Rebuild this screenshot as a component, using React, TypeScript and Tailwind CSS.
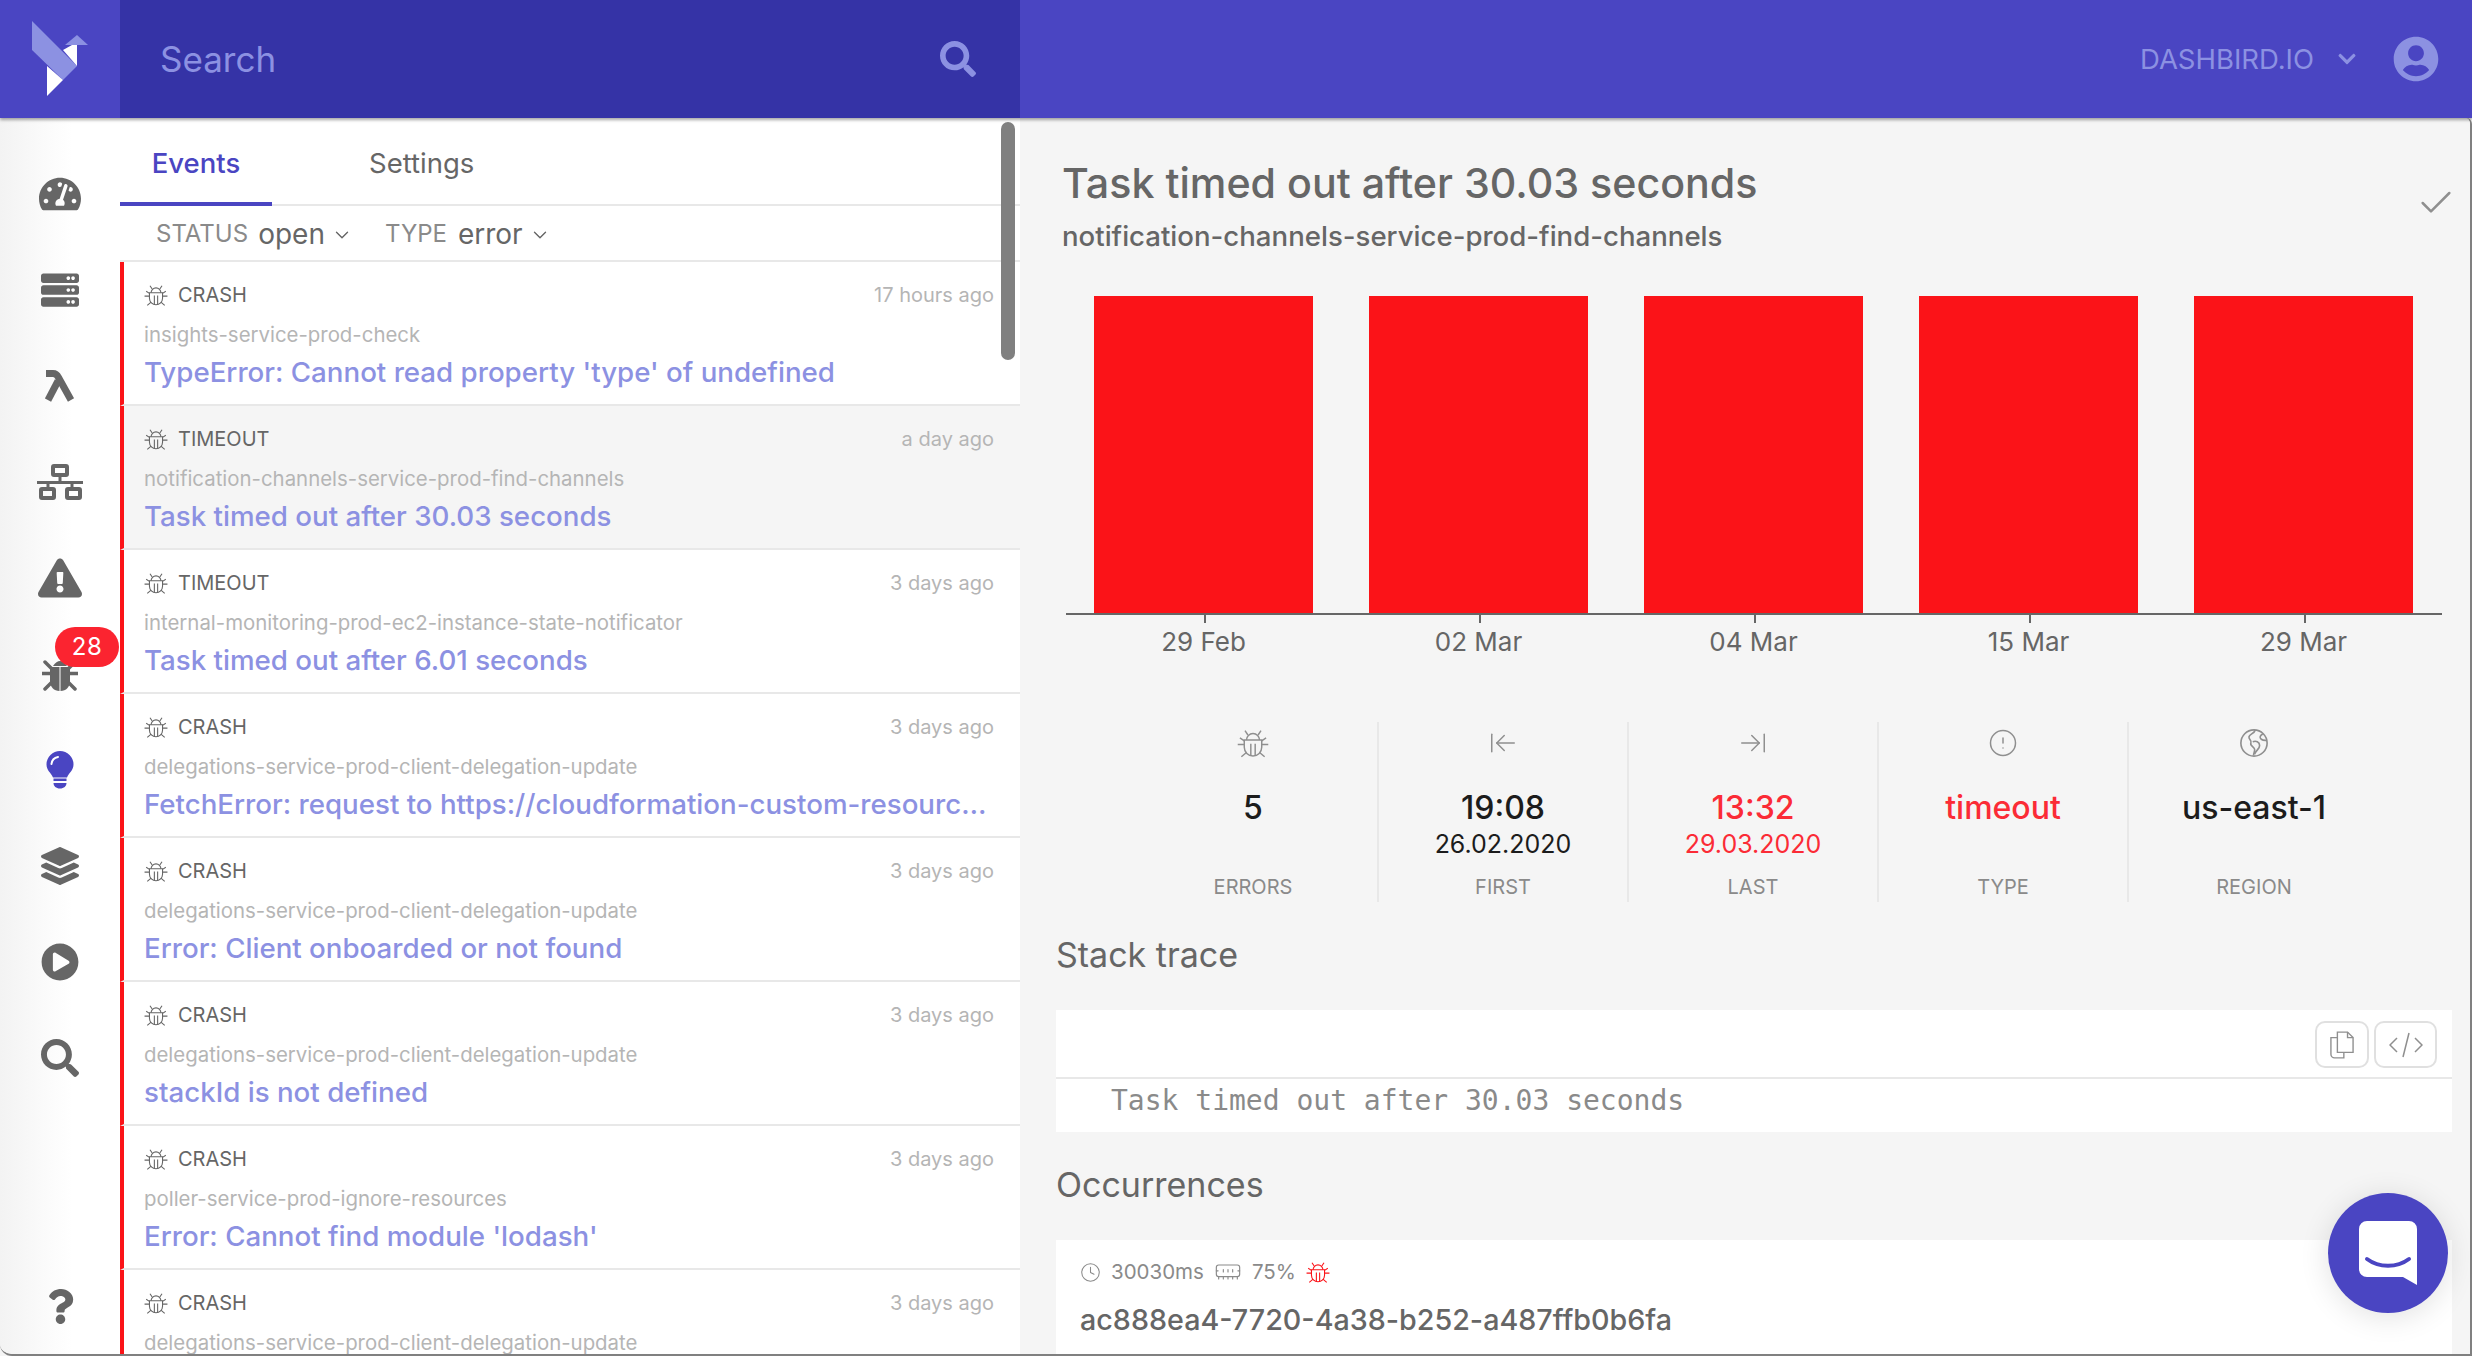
import {
  FaChevronDown,
  FaExclamationTriangle,
  FaLayerGroup,
  FaPlayCircle,
  FaQuestion,
  FaSearch,
  FaServer,
  FaTachometerAlt,
  FaUserCircle,
} from "react-icons/fa";
import { ArrowLeftToLine, ArrowRightToLine, Check, ChevronDown, CircleAlert, Clock, MemoryStick } from "lucide-react";

type EventItem = { kind: string; ago: string; fn: string; title: string; active?: boolean };

const events: EventItem[] = [
  { kind: "CRASH", ago: "17 hours ago", fn: "insights-service-prod-check", title: "TypeError: Cannot read property 'type' of undefined" },
  { kind: "TIMEOUT", ago: "a day ago", fn: "notification-channels-service-prod-find-channels", title: "Task timed out after 30.03 seconds", active: true },
  { kind: "TIMEOUT", ago: "3 days ago", fn: "internal-monitoring-prod-ec2-instance-state-notificator", title: "Task timed out after 6.01 seconds" },
  { kind: "CRASH", ago: "3 days ago", fn: "delegations-service-prod-client-delegation-update", title: "FetchError: request to https://cloudformation-custom-resource-response-useast1.s3.amazonaws.com" },
  { kind: "CRASH", ago: "3 days ago", fn: "delegations-service-prod-client-delegation-update", title: "Error: Client onboarded or not found" },
  { kind: "CRASH", ago: "3 days ago", fn: "delegations-service-prod-client-delegation-update", title: "stackId is not defined" },
  { kind: "CRASH", ago: "3 days ago", fn: "poller-service-prod-ignore-resources", title: "Error: Cannot find module 'lodash'" },
  { kind: "CRASH", ago: "3 days ago", fn: "delegations-service-prod-client-delegation-update", title: "Error: Client onboarded or not found" },
];

const bars = ["29 Feb", "02 Mar", "04 Mar", "15 Mar", "29 Mar"];

function BugOutline({ className }: { className?: string }) {
  return (
    <svg viewBox="0 0 22 20" fill="none" stroke="currentColor" strokeWidth="1" className={className}>
      <path d="M5 8h12v5a6 6 0 0 1-12 0z" />
      <path d="M6.500 8a4.500 4.500 0 0 1 9 0" />
      <path d="M7.500 4.500 5.500 1.500M14.500 4.500l2-3M5 11H.5M17 11h4.500M5 8.500 2 6.500M17 8.500l3-2M6.500 16.500 3 19.500M15.500 16.500l3.500 3" />
      <path d="M9.500 10.500v8M12.500 10.500v8" />
    </svg>
  );
}

function BugFilled() {
  return (
    <svg viewBox="0 0 36 36" className="h-[36px] w-[36px]" fill="#666666">
      <path d="M11 10q7-10 14 0z" />
      <path d="M8 11h9.500v24C12 35 8 31 8 25z" />
      <path d="M18.500 11H28v14c0 6-4 10-9.500 10z" />
      <path d="M0 17.500h8M28 17.500h8M3 33l6-6M33 33l-6-6M3 6l6 6M33 6l-6 6" stroke="#666666" strokeWidth="3.500" strokeLinecap="round" />
    </svg>
  );
}

function Bulb() {
  return (
    <svg viewBox="0 0 28 38" className="h-[38px] w-[28px]">
      <path d="M14 0a13.500 13.500 0 0 1 13.500 13.500c0 6-4.500 8-6.500 13H7c-2-5-6.500-7-6.500-13A13.500 13.500 0 0 1 14 0z" fill="#4a45c2" />
      <path d="M7.500 27.500h13V30h-13zM7.500 32h13c0 3-2.500 5.500-6.500 5.500S7.500 35 7.500 32z" fill="#4a45c2" />
      <path d="M5.500 13a8 8 0 0 1 6.500-7" fill="none" stroke="#ffffff" strokeWidth="2" strokeLinecap="round" />
    </svg>
  );
}

function Logo() {
  return (
    <svg viewBox="0 0 120 118" className="h-[118px] w-[120px]">
      <path d="M32 21 L77 66 L63 80 L32 50 Z" fill="#8c91e2" />
      <path d="M47 66 L63 80 L47 96 Z" fill="#ffffff" />
      <path d="M63 50 L72 45 L77 45 L77 66 Z" fill="#ffffff" />
      <path d="M65 45 L77 35 L88 45 Z" fill="#8c91e2" />
    </svg>
  );
}

function Lambda() {
  return (
    <svg viewBox="0 0 30 32" className="h-[32px] w-[30px]" fill="none" stroke="#666666" strokeWidth="7">
      <path d="M1 3.500h7q3.500 0 5.500 4L26 30" />
      <path d="M3 30 13 11" />
    </svg>
  );
}

function Network() {
  return (
    <svg viewBox="0 0 46 36" className="h-[36px] w-[46px]" fill="none" stroke="#666666" strokeWidth="4">
      <rect x="16" y="2" width="14" height="9" rx="1" />
      <path d="M23 12v6M0 18.500h46M11 18v6M35 18v6" strokeWidth="3" />
      <rect x="4" y="25" width="13" height="9" rx="1" />
      <rect x="30" y="25" width="13" height="9" rx="1" />
    </svg>
  );
}

function Earth() {
  return (
    <svg viewBox="0 0 24 24" className="h-[30px] w-[30px]" fill="none" stroke="currentColor" strokeWidth="1.300">
      <circle cx="12" cy="12" r="10.500" />
      <path d="M13 1.700c-1 3-4.500 3-5 5.300s2.500 2.800 1.500 5 2.700 3 3 5-1 3-.8 5" />
      <path d="M19 4.800c-2 1-3 3-1.200 4.200s3 .8 4.500 1" />
      <path d="M11 11c2.500-1 5.500 0 5.500 3s-3 3.500-4 7" />
    </svg>
  );
}

function CopyIcon() {
  return (
    <svg viewBox="0 0 26 30" className="h-[28px] w-[24px]" fill="none" stroke="#8f8f8f" strokeWidth="1.500">
      <path d="M8 1h11l6 6v16H8z" />
      <path d="M19 1v6h6" />
      <path d="M8 7H1v18a4 4 0 0 0 4 4h10v-6" />
    </svg>
  );
}

function CodeIcon() {
  return (
    <svg viewBox="0 0 34 26" className="h-[26px] w-[34px]" fill="none" stroke="#8f8f8f" strokeWidth="1.500">
      <path d="M8 6 1 13l7 7M26 6l7 7-7 7M20 1l-6 24" />
    </svg>
  );
}

function NavItem({ children }: { children: React.ReactNode }) {
  return <div className="flex h-[96px] items-center justify-center text-[#666666]">{children}</div>;
}

function Sidebar() {
  return (
    <div className="flex w-[120px] shrink-0 flex-col bg-gradient-to-r from-[#f3f3f3] to-white to-60% pt-[28px]">
      <NavItem><FaTachometerAlt size={42} /></NavItem>
      <NavItem><FaServer size={38} /></NavItem>
      <NavItem><Lambda /></NavItem>
      <NavItem><Network /></NavItem>
      <NavItem><FaExclamationTriangle size={44} /></NavItem>
      <div className="relative">
        <NavItem><BugFilled /></NavItem>
        <span className="absolute left-[55px] top-[1px] flex h-[40px] w-[64px] items-center justify-center rounded-full bg-[#fb2430] text-[24px] tracking-wide text-white">28</span>
      </div>
      <NavItem><Bulb /></NavItem>
      <NavItem><FaLayerGroup size={38} /></NavItem>
      <NavItem><FaPlayCircle size={38} /></NavItem>
      <NavItem><FaSearch size={38} /></NavItem>
      <div className="mt-auto">
        <NavItem><FaQuestion size={35} /></NavItem>
      </div>
    </div>
  );
}

function EventRow({ item }: { item: EventItem }) {
  return (
    <div className={`flex h-[144px] shrink-0 flex-col border-b-[2px] border-l-[4px] border-b-[#e8e8e8] border-l-[#fb1318] pl-[20px] pr-[26px] pt-[19px] ${item.active ? "bg-[#f5f5f5]" : "bg-white"}`}>
      <div className="flex h-[28px] items-center text-[20px]">
        <BugOutline className="h-[22px] w-[24px] text-[#666666]" />
        <span className="ml-[10px] text-[#666666]">{item.kind}</span>
        <span className="ml-auto text-[#b5b5b5]">{item.ago}</span>
      </div>
      <div className="mt-[12px] h-[28px] truncate text-[20.400px] leading-[28px] text-[#b5b5b5]">{item.fn}</div>
      <div className="mt-[4px] truncate text-[27.700px] font-medium leading-[38px] text-[#8c91e2]">{item.title}</div>
    </div>
  );
}

function EventList() {
  return (
    <div className="relative flex w-[900px] shrink-0 flex-col overflow-hidden bg-white">
      <div className="flex h-[88px] shrink-0 border-b-[2px] border-[#e8e8e8] pt-[6px] text-[27.500px]">
        <div className="relative flex w-[152px] items-center justify-center font-medium text-[#4a45c2]">
          Events
          <span className="absolute bottom-[-2px] left-0 h-[4px] w-full bg-[#4a45c2]" />
        </div>
        <div className="ml-[97px] flex items-center text-[#666666]">Settings</div>
      </div>
      <div className="flex h-[56px] shrink-0 items-center border-b-[2px] border-[#e8e8e8] pl-[36px] pt-[2px] text-[#666666]">
        <span className="text-[24px] text-[#8a8a8a]">STATUS</span>
        <span className="ml-[10px] text-[28px]">open</span>
        <ChevronDown size={22} strokeWidth={1.500} className="ml-[6px] mt-[2px]" />
        <span className="ml-[32px] text-[24px] text-[#8a8a8a]">TYPE</span>
        <span className="ml-[11px] text-[28px]">error</span>
        <ChevronDown size={22} strokeWidth={1.500} className="ml-[6px] mt-[2px]" />
      </div>
      {events.map((item, i) => (
        <EventRow key={i} item={item} />
      ))}
      <div className="absolute left-[881px] top-[4px] h-[238px] w-[14px] rounded-full bg-[#808080]" />
    </div>
  );
}

function Stat({ icon, value, sub, label, red }: { icon: React.ReactNode; value: string; sub?: string; label: string; red?: boolean }) {
  return (
    <div className="flex h-[180px] w-[250px] flex-col items-center border-r-[2px] border-[#e8e8e8] last:border-r-0">
      <div className="flex h-[42px] items-center text-[#8f8f8f]">{icon}</div>
      <div className={`mt-[25px] text-[32px] font-medium leading-[40px] ${red ? "text-[#fb2b36]" : "text-[#1c1c1c]"}`}>{value}</div>
      <div className={`h-[32px] text-[25px] leading-[32px] ${red ? "text-[#fb2b36]" : "text-[#1c1c1c]"}`}>{sub}</div>
      <div className="mt-[12px] text-[20px] text-[#8a8a8a]">{label}</div>
    </div>
  );
}

function Details() {
  return (
    <div className="relative flex min-w-0 flex-1 flex-col bg-[#f5f5f5] pl-[36px] pr-[18px]">
      <div className="flex shrink-0 justify-between">
        <div className="pl-[6px]">
          <h1 className="mt-[40px] text-[41.200px] font-medium leading-[50px] text-[#666666]">Task timed out after 30.03 seconds</h1>
          <div className="mt-[10px] text-[27.600px] font-medium leading-[36px] text-[#666666]">notification-channels-service-prod-find-channels</div>
        </div>
        <Check size={40} strokeWidth={1.500} className="mr-[-4px] mt-[65px] text-[#8f8f8f]" />
      </div>

      <div className="ml-[10px] mr-[10px] mt-[42px] flex h-[319px] shrink-0 gap-[56px] border-b-[2px] border-[#666666] pl-[28px]">
        {bars.map((b) => (
          <div key={b} className="w-[219px] bg-[#fb1318]" />
        ))}
      </div>
      <div className="ml-[10px] flex shrink-0 gap-[56px] pl-[28px]">
        {bars.map((b) => (
          <div key={b} className="relative w-[219px] pt-[11px] text-center text-[26px] leading-[32px] text-[#666666]">
            <span className="absolute left-1/2 top-0 h-[8px] w-[2px] bg-[#666666]" />
            {b}
          </div>
        ))}
      </div>

      <div className="mt-[64px] flex shrink-0 pl-[73px]">
        <Stat icon={<BugOutline className="h-[30px] w-[32px]" />} value="5" label="ERRORS" />
        <Stat icon={<ArrowLeftToLine size={30} strokeWidth={1.200} />} value="19:08" sub="26.02.2020" label="FIRST" />
        <Stat icon={<ArrowRightToLine size={30} strokeWidth={1.200} />} value="13:32" sub="29.03.2020" label="LAST" red />
        <Stat icon={<CircleAlert size={30} strokeWidth={1.200} />} value="timeout" label="TYPE" red />
        <Stat icon={<Earth />} value="us-east-1" label="REGION" />
      </div>

      <h2 className="mt-[31px] shrink-0 text-[34px] leading-[44px] text-[#666666]">Stack trace</h2>
      <div className="mt-[33px] shrink-0 bg-white">
        <div className="flex h-[69px] justify-end gap-[5px] border-b-[2px] border-[#e8e8e8] pr-[15px] pt-[11px]">
          <div className="flex h-[47px] w-[54px] items-center justify-center rounded-[10px] border-[2px] border-[#e0e0e0]"><CopyIcon /></div>
          <div className="flex h-[47px] w-[63px] items-center justify-center rounded-[10px] border-[2px] border-[#e0e0e0]"><CodeIcon /></div>
        </div>
        <div className="h-[53px] pl-[55px] font-['DejaVu_Sans_Mono',monospace] text-[28px] leading-[44px] text-[#8a8a8a]">Task timed out after 30.03 seconds</div>
      </div>

      <h2 className="mt-[31px] shrink-0 text-[34px] leading-[44px] text-[#666666]">Occurrences</h2>
      <div className="mt-[33px] h-[130px] shrink-0 bg-white pl-[24px] pt-[20px]">
        <div className="flex h-[24px] items-center gap-[10px] text-[20.500px] text-[#8a8a8a]">
          <Clock size={21} strokeWidth={1.200} />
          <span>30030ms</span>
          <MemoryStick size={28} strokeWidth={1} />
          <span>75%</span>
          <BugOutline className="h-[22px] w-[24px] text-[#fb1318]" />
        </div>
        <div className="mt-[16px] text-[28.700px] font-medium leading-[40px] text-[#666666]">ac888ea4-7720-4a38-b252-a487ffb0b6fa</div>
      </div>
    </div>
  );
}

function ChatBubble() {
  return (
    <div className="absolute left-[2328px] top-[1193px] flex h-[120px] w-[120px] items-center justify-center rounded-full bg-[#4a45c2] shadow-[0_4px_30px_rgba(0,0,0,0.12)]">
      <svg viewBox="0 0 58 64" className="h-[64px] w-[58px]">
        <path d="M8 0h42a8 8 0 0 1 8 8v56l-14-8H8a8 8 0 0 1-8-8V8a8 8 0 0 1 8-8z" fill="#ffffff" />
        <path d="M8 38c12 9 30 9 42 0" fill="none" stroke="#4a45c2" strokeWidth="4" strokeLinecap="round" />
      </svg>
    </div>
  );
}

export default function App() {
  return (
    <div className="relative flex h-[1356px] w-[2472px] flex-col overflow-hidden bg-[#f5f5f5] font-['Inter',sans-serif]">
      <header className="z-10 flex h-[118px] shrink-0 bg-[#4a45c2] shadow-[0_2px_3px_rgba(0,0,0,0.35)]">
        <div className="w-[120px]"><Logo /></div>
        <div className="flex w-[900px] items-center justify-between bg-[#3533a6] pl-[40px] pr-[44px]">
          <span className="text-[35px] text-[#8c91e2]">Search</span>
          <FaSearch size={36} className="text-[#8c91e2]" />
        </div>
        <div className="ml-auto flex items-center pr-[33px] text-[#8c91e2]">
          <span className="mt-[2px] text-[27.500px]">DASHBIRD.IO</span>
          <FaChevronDown size={20} className="ml-[23px]" />
          <FaUserCircle size={46} className="ml-[36px]" />
        </div>
      </header>
      <div className="flex min-h-0 flex-1 overflow-hidden rounded-bl-[12px] rounded-tr-[6px] border-b-[2px] border-r-[2px] border-[#808080]">
        <Sidebar />
        <EventList />
        <Details />
      </div>
      <ChatBubble />
    </div>
  );
}
